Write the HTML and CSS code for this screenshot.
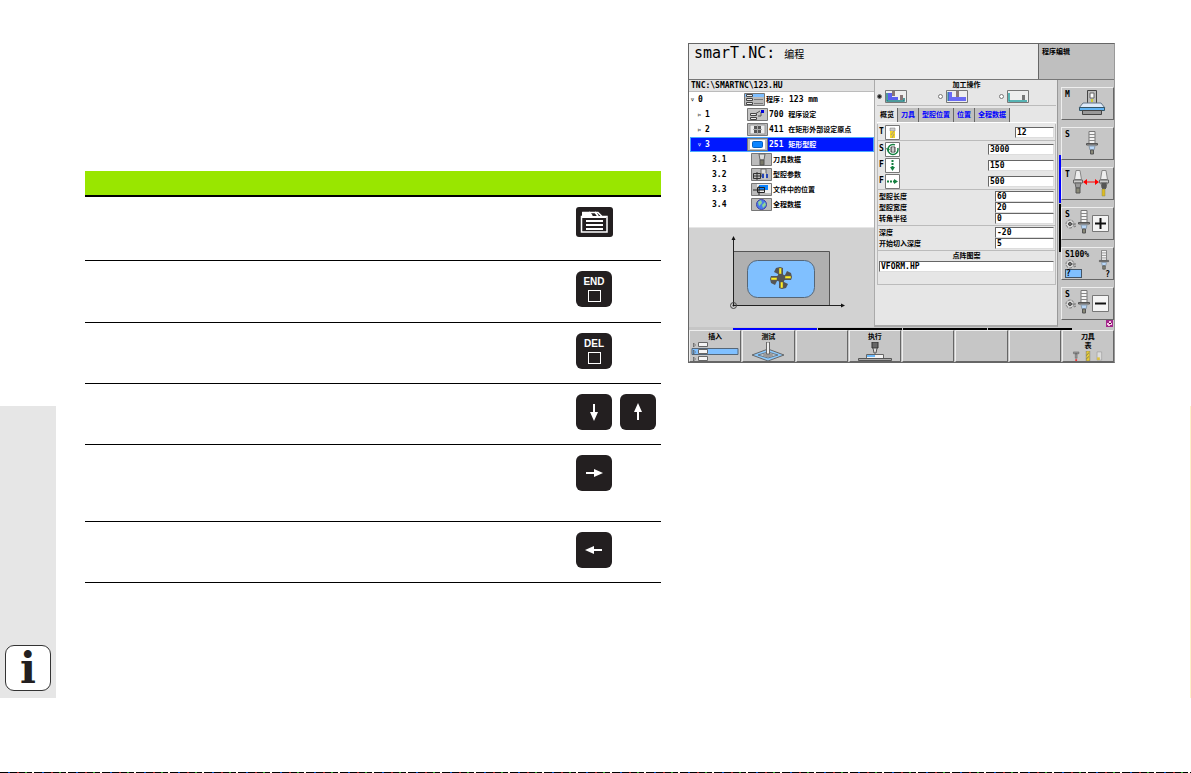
FILE: index.html
```html
<!DOCTYPE html>
<html lang="zh-CN">
<head>
    <meta charset="UTF-8">
    <meta name="viewport" content="width=device-width, initial-scale=1.0">
    <title>smarT.NC</title>
    <link rel="stylesheet" href="styles.css">
</head>
<body>
    <!-- Shared icons -->
    <svg class="defs" width="0" height="0" aria-hidden="true">
        <symbol id="spindle" viewBox="0 0 12 24">
            <path d="M3 .5h6v12H3z" fill="#f4f4f4" stroke="#777"/>
            <path d="M3 3.5h6M3 6.5h6M3 9.5h6" stroke="#888"/>
            <path d="M.5 12.5h11v1.500H.5z" fill="#999" stroke="#555"/>
            <path d="M3 15h6l-1 4H4z" fill="#b9d8fa" stroke="#89a"/>
            <path d="M4.500 19h3v4h-3z" fill="#887" stroke="#555"/>
        </symbol>
        <symbol id="knob" viewBox="0 0 12 10">
            <circle cx="5" cy="5" r="4" fill="#d8d8d8" stroke="#777" stroke-dasharray="3 1"/>
            <circle cx="5" cy="5" r="1.500" fill="#777" stroke="#444"/>
            <path d="M7 5h4M9 8l2-1" stroke="#777"/>
        </symbol>
        <symbol id="holder" viewBox="0 0 10 26">
            <path d="M3 .5h4l1.500 9h-7z" fill="#eee" stroke="#888"/>
            <path d="M.5 10h9v3h-9z" fill="#ccc" stroke="#666"/>
            <path d="M2 13h6l-1 5H3z" fill="#999" stroke="#666"/>
        </symbol>
        <symbol id="blade" viewBox="-12 -12 24 24">
            <path d="M-2 0l-1-4-4-2 2-4 4-1 3 1v7l1 3z" fill="#555"/>
            <path d="M-2-10h2.500v6H-2z" fill="#fe2" stroke="#665" stroke-width=".5"/>
        </symbol>
    </svg>

    <div class="page">
        <aside class="side">
            <div class="info">i</div>
        </aside>

        <!-- Key overview -->
        <table class="keys">
            <thead>
                <tr><th></th><th></th></tr>
            </thead>
            <tbody>
                <tr class="tall">
                    <td></td>
                    <td>
                        <button class="hard-key wide" aria-label="Screen">
                            <svg width="37" height="30" viewBox="0 0 37 30">
                                <path d="M5.500 25V9.500H7V5.500h15l4 4h5V25z" fill="none" stroke="#fff" stroke-width="1.500"/>
                                <path d="M6 10h24" stroke="#fff" stroke-width="2"/>
                                <path d="M6 5h7l3 4H6z" fill="#fff"/>
                                <path d="M13 5l3 4M19 5l3 4" stroke="#fff" stroke-width="2"/>
                                <path d="M10 14h17M10 18h17M10 22h17" stroke="#fff" stroke-width="2"/>
                            </svg>
                        </button>
                    </td>
                </tr>
                <tr class="mid">
                    <td></td>
                    <td><button class="hard-key">END<span class="square"></span></button></td>
                </tr>
                <tr>
                    <td></td>
                    <td><button class="hard-key">DEL<span class="square"></span></button></td>
                </tr>
                <tr>
                    <td></td>
                    <td>
                        <div class="pair">
                            <button class="hard-key" aria-label="Down"><svg width="18" height="18" viewBox="0 0 18 18"><path d="M8 1h2v8h3L9 18 5 9h3z" fill="#fff"/></svg></button>
                            <button class="hard-key" aria-label="Up"><svg width="18" height="18" viewBox="0 0 18 18"><path d="M8 17h2V9h3L9 0 5 9h3z" fill="#fff"/></svg></button>
                        </div>
                    </td>
                </tr>
                <tr class="taller">
                    <td></td>
                    <td><button class="hard-key" aria-label="Right"><svg width="18" height="18" viewBox="0 0 18 18"><path d="M1 8v2h8v3l9-4-9-4v3z" fill="#fff"/></svg></button></td>
                </tr>
                <tr>
                    <td></td>
                    <td><button class="hard-key" aria-label="Left"><svg width="18" height="18" viewBox="0 0 18 18"><path d="M17 8v2H9v3L0 9l9-4v3z" fill="#fff"/></svg></button></td>
                </tr>
            </tbody>
        </table>

        <!-- Control screen -->
        <main class="screen">
            <header class="top">
                <h1 class="mode">smarT.NC: <span>编程</span></h1>
                <div class="mode-side">程序编辑</div>
            </header>

            <div class="work">
                <section class="left">
                    <div class="path">TNC:\SMARTNC\123.HU</div>
                    <ul class="tree">
                        <li class="root">
                            <i>▿</i><b>0</b>
                            <svg width="21" height="13" viewBox="0 0 21 13"><path d="M.5.5h20v12H.5z" fill="#bbb" stroke="#777"/><path d="M1 1h19v3H1z" fill="#7fbfff"/><path d="M2.500 1.500h6v2h-6zM2.500 5.500h6v2h-6zM2.500 9.500h6v2h-6z" fill="#eee" stroke="#444"/><path d="M10 6.500h9M10 10.500h9" stroke="#777"/></svg>
                            <span class="cn">程序: </span><span>&nbsp;123 mm</span>
                        </li>
                        <li>
                            <i>▹</i><b>1</b>
                            <svg width="21" height="13" viewBox="0 0 21 13"><path d="M.5.5h20v12H.5z" fill="#c4c4c4" stroke="#777"/><path d="M3.500 5.500h6v2h-6zM3.500 9.500h6v2h-6z" fill="#eee" stroke="#444"/><path d="M8 6l5-3M11 8h3V4" fill="none" stroke="#555"/><path d="M14 2h3v3h-3z" fill="#00d"/></svg>
                            <span>700&nbsp;</span><span class="cn">程序设定</span>
                        </li>
                        <li>
                            <i>▹</i><b>2</b>
                            <svg width="21" height="13" viewBox="0 0 21 13"><path d="M.5.5h20v12H.5z" fill="#bbb" stroke="#777"/><path d="M3 2h15v9H3z" fill="#eee" stroke="#999"/><path d="M7 3h7v7H7z" fill="#555"/><path d="M10.500 2v9M6 6.500h9" stroke="#aaa"/></svg>
                            <span>411&nbsp;</span><span class="cn">在矩形外部设定原点</span>
                        </li>
                        <li class="current">
                            <i>▿</i><b>3</b>
                            <svg width="21" height="13" viewBox="0 0 21 13"><path d="M.5.5h20v12H.5z" fill="#bbb" stroke="#777"/><path d="M3 2h15v9H3z" fill="#fff"/><rect x="5.500" y="3.500" width="10" height="6" rx="1" fill="#0c84ff" stroke="#0560c0"/></svg>
                            <span>251&nbsp;</span><span class="cn">矩形型腔</span>
                        </li>
                        <li class="leaf">
                            <b>3.1</b>
                            <svg width="21" height="13" viewBox="0 0 21 13"><path d="M.5.5h20v12H.5z" fill="#bbb" stroke="#777"/><path d="M8 1h6l-1 6H9z" fill="#ddd" stroke="#666"/><path d="M9 7h4v5H9z" fill="#776" stroke="#555"/></svg>
                            <span class="cn">刀具数据</span>
                        </li>
                        <li class="leaf">
                            <b>3.2</b>
                            <svg width="21" height="13" viewBox="0 0 21 13"><path d="M.5.5h20v12H.5z" fill="#bbb" stroke="#777"/><path d="M10 1h5v5h-5z" fill="#ddd" stroke="#666"/><path d="M2.500 5.500h7v5h-7zM6 4v8M2 8h15" fill="none" stroke="#333"/><path d="M11 6h6v4h-6z" fill="#2547b8"/><path d="M13 5h2v6h-2z" fill="#ccc"/></svg>
                            <span class="cn">型腔参数</span>
                        </li>
                        <li class="leaf">
                            <b>3.3</b>
                            <svg width="21" height="13" viewBox="0 0 21 13"><path d="M.5.5h20v12H.5z" fill="#bbb" stroke="#777"/><path d="M6 1h14v9H6z" fill="#eee"/><path d="M8 2h9v5H8z" fill="#0c84ff"/><path d="M6.500 4.500h7v5h-7zM2 7h12M8 3v9" fill="none" stroke="#222"/></svg>
                            <span class="cn">文件中的位置</span>
                        </li>
                        <li class="leaf">
                            <b>3.4</b>
                            <svg width="21" height="13" viewBox="0 0 21 13"><path d="M.5.5h20v12H.5z" fill="#bbb" stroke="#777"/><circle cx="10.500" cy="6.500" r="5" fill="#4778ee" stroke="#4444a0"/><path d="M7 4l3-2 1 3-3 3zM11 7l3-3 1 3-3 3z" fill="#8ed694"/></svg>
                            <span class="cn">全程数据</span>
                        </li>
                    </ul>
                    <div class="graphic">
                        <svg width="120" height="76" viewBox="0 0 120 76">
                            <path d="M5.500 16.500h96v54h-96z" fill="#b0b0b0" stroke="#555"/>
                            <rect x="19.500" y="25.500" width="67" height="37" rx="10" fill="#80c0ff" stroke="#567"/>
                            <path d="M5.500 70.500V4M5.500 70.500H114" stroke="#222"/>
                            <path d="M5.500 1l2 4h-4zM117 70.500l-4-2v4z" fill="#111"/>
                            <circle cx="5.500" cy="70.500" r="3" fill="none" stroke="#444"/>
                            <circle cx="5.500" cy="70.500" r="1" fill="#111"/>
                            <g transform="translate(53 43)">
                                <use href="#blade" x="-12" y="-12" width="24" height="24"/>
                                <use href="#blade" x="-12" y="-12" width="24" height="24" transform="rotate(90)"/>
                                <use href="#blade" x="-12" y="-12" width="24" height="24" transform="rotate(180)"/>
                                <use href="#blade" x="-12" y="-12" width="24" height="24" transform="rotate(270)"/>
                                <circle r="4" fill="#555"/>
                            </g>
                        </svg>
                    </div>
                </section>

                <form class="form">
                    <fieldset class="operation">
                        <legend>加工操作</legend>
                        <div class="choices">
                            <label><input type="radio" name="op" aria-label="粗加工和精加工" checked>
                                <svg width="22" height="13" viewBox="0 0 22 13"><path d="M.5.5h21v12H.5z" fill="#eee" stroke="#777"/><path d="M3 3v7h10V7H7V3z" fill="#5b60f0"/><path d="M2 3v8h17V8" fill="none" stroke="#197f80" stroke-width="1.500"/><path d="M7 1h3v5H7zM15 5h3v5h-3z" fill="#877"/></svg>
                            </label>
                            <label><input type="radio" name="op" aria-label="粗加工">
                                <svg width="22" height="13" viewBox="0 0 22 13"><path d="M.5.5h21v12H.5z" fill="#eee" stroke="#777"/><path d="M2 2v9h18V7H6V2z" fill="#6a6af5"/><path d="M2 2v9" stroke="#197f80"/><path d="M10 1h3v6h-3z" fill="#877"/></svg>
                            </label>
                            <label><input type="radio" name="op" aria-label="精加工">
                                <svg width="22" height="13" viewBox="0 0 22 13"><path d="M.5.5h21v12H.5z" fill="#eee" stroke="#777"/><path d="M2 3v8h18" fill="none" stroke="#26a0a0" stroke-width="1.500"/><path d="M15 5h3v5h-3z" fill="#777"/></svg>
                            </label>
                        </div>
                    </fieldset>

                    <nav class="tabs">
                        <button type="button" class="active">概览</button>
                        <button type="button">刀具</button>
                        <button type="button">型腔位置</button>
                        <button type="button">位置</button>
                        <button type="button">全程数据</button>
                    </nav>

                    <div class="panel">
                        <div class="group">
                            <div class="field big">
                                <label for="tool">T</label>
                                <svg width="15" height="15" viewBox="0 0 15 15"><path d="M.5.5h14v14H.5z" fill="#fff" stroke="#777"/><path d="M5 3h5v3H5z" fill="#ccc" stroke="#777" stroke-width=".5"/><path d="M5 6h5v7H5z" fill="#f1d52a"/><path d="M9 6l-3 4M9 9l-2 4" stroke="#a97"/></svg>
                                <input id="tool" class="short" value="12">
                            </div>
                        </div>
                        <div class="group">
                            <div class="field big">
                                <label for="speed">S</label>
                                <svg width="15" height="15" viewBox="0 0 15 15"><path d="M.5.5h14v14H.5z" fill="#fff" stroke="#777"/><circle cx="8" cy="7.500" r="5" fill="none" stroke="#158040" stroke-width="1.500" stroke-dasharray="25 4"/><path d="M1 6l2 4 2-3z" fill="#158040"/><path d="M6 5h4v5H6z" fill="#aaa" stroke="#444"/><path d="M8 5v5" stroke="#eee"/></svg>
                                <input id="speed" class="long" value="3000">
                            </div>
                            <div class="field big">
                                <label for="feed-z">F</label>
                                <svg width="15" height="15" viewBox="0 0 15 15"><path d="M.5.5h14v14H.5z" fill="#fff" stroke="#777"/><path d="M7.500 2v7" stroke="#158040" stroke-width="2" stroke-dasharray="2 1"/><path d="M5 9h5l-2.500 4z" fill="#158040"/></svg>
                                <input id="feed-z" class="long" value="150">
                            </div>
                            <div class="field big">
                                <label for="feed">F</label>
                                <svg width="15" height="15" viewBox="0 0 15 15"><path d="M.5.5h14v14H.5z" fill="#fff" stroke="#777"/><path d="M2 7.500h8" stroke="#158040" stroke-width="2" stroke-dasharray="2 1"/><path d="M9 5v5l4-2.500z" fill="#158040"/></svg>
                                <input id="feed" class="long" value="500">
                            </div>
                        </div>
                        <div class="group lines">
                            <div class="field"><label for="length">型腔长度</label><input id="length" value="60"></div>
                            <div class="field"><label for="width">型腔宽度</label><input id="width" value="20"></div>
                            <div class="field"><label for="radius">转角半径</label><input id="radius" value="0"></div>
                        </div>
                        <div class="group lines">
                            <div class="field"><label for="depth">深度</label><input id="depth" value="-20"></div>
                            <div class="field"><label for="plunge">开始切入深度</label><input id="plunge" value="5"></div>
                        </div>
                        <div class="group pattern">
                            <label for="pattern">点阵图案</label>
                            <input id="pattern" value="VFORM.HP">
                        </div>
                    </div>
                </form>

                <aside class="right">
                    <div class="bars"><span></span><span></span></div>
                    <div class="soft-column">
                        <button class="soft">
                            <span class="mark">M</span>
                            <svg width="28" height="26" viewBox="0 0 28 26"><path d="M9.500.5h9v14h-9z" fill="#bbb" stroke="#444"/><path d="M12 3h4v5h-4z" fill="#fff" stroke="#666"/><path d="M13 9h2v3h-2z" fill="#cc3"/><path d="M5 13h18l4 5H1z" fill="#ddeafa" stroke="#678"/><path d="M1.500 17.500h25v3h-25z" fill="#62b4f5" stroke="#356"/><path d="M4.500 20.500h19v4h-19z" fill="#999" stroke="#444"/></svg>
                        </button>
                        <button class="soft">
                            <span class="mark">S</span>
                            <svg class="center" width="12" height="26"><use href="#spindle"/></svg>
                        </button>
                        <button class="soft">
                            <span class="mark">T</span>
                            <svg class="swap" width="36" height="28" viewBox="0 0 36 28"><use href="#holder" width="10" height="26"/><use href="#holder" x="26" width="10" height="26"/><path d="M3 18h4v5H3z" fill="#887" stroke="#555"/><path d="M29 13h4v6h-4z" fill="#555"/><path d="M29 19h3v7h-3z" fill="#db2" stroke="#885" stroke-width=".5"/><path d="M12 12h12" stroke="#f00"/><path d="M10 12l4-3v6zM26 12l-4-3v6z" fill="#f00"/></svg>
                        </button>
                        <button class="soft" aria-label="S +">
                            <span class="mark">S<svg width="12" height="10"><use href="#knob"/></svg></span>
                            <svg class="tool" width="12" height="24"><use href="#spindle"/></svg>
                            <svg class="sign" width="17" height="17" viewBox="0 0 17 17"><path d="M.5.5h16v16H.5z" fill="#f4f4f4" stroke="#777"/><path d="M3 8.500h11M8.500 3v11" stroke="#111" stroke-width="2"/></svg>
                        </button>
                        <button class="soft">
                            <span class="mark">S100%<svg width="12" height="10"><use href="#knob"/></svg><em>?</em></span>
                            <span class="percent"><svg width="12" height="20"><use href="#spindle"/></svg>?</span>
                        </button>
                        <button class="soft" aria-label="S -">
                            <span class="mark">S<svg width="12" height="10"><use href="#knob"/></svg></span>
                            <svg class="tool" width="12" height="24"><use href="#spindle"/></svg>
                            <svg class="sign" width="17" height="17" viewBox="0 0 17 17"><path d="M.5.5h16v16H.5z" fill="#f4f4f4" stroke="#777"/><path d="M3 8.500h11" stroke="#111" stroke-width="2"/></svg>
                        </button>
                        <svg class="status" width="7" height="7" viewBox="0 0 7 7"><path d="M0 0h7v7H0z" fill="#a3288c"/><path d="M1 3h2V1h2v2h1v2H4v1H2V5H1z" fill="#f8c8e8"/><path d="M3 3h2v1H3z" fill="#412"/></svg>
                    </div>
                </aside>
            </div>

            <div class="pages"><span class="on"></span><span></span><span></span><span></span></div>

            <footer class="soft-row">
                <button class="soft">插入
                    <svg width="48" height="19" viewBox="0 0 48 19"><path d="M1 6.500h46v6H1z" fill="#80c0ff" stroke="#567"/><path d="M7.500.5h9v4h-9zM7.500 7.500h9v4h-9zM7.500 14.500h9v4h-9z" fill="#f4f4f4" stroke="#666"/><path d="M2.500 1v4l2-2zM2.500 8v4l2-2zM2.500 15v4l2-2z" fill="none" stroke="#555" stroke-width=".7"/></svg>
                </button>
                <button class="soft">测试
                    <svg width="34" height="19" viewBox="0 0 34 19"><path d="M1 13l16-6 16 6-16 6z" fill="#8bc8fb" stroke="#666"/><path d="M7 13l10-3 10 3-10 3z" fill="#ccc" stroke="#678"/><ellipse cx="17" cy="13" rx="5" ry="2" fill="#999"/><path d="M15.500 0h3v12h-3z" fill="#eee" stroke="#666"/></svg>
                </button>
                <button class="soft" aria-label="空"></button>
                <button class="soft">执行
                    <svg width="34" height="19" viewBox="0 0 34 19"><path d="M14 0h6v6h-6z" fill="#666" stroke="#333"/><path d="M15 6h4l-1 5h-2z" fill="#ddd" stroke="#555"/><path d="M8.500 12.500h17v4h-17z" fill="#f4f4f4" stroke="#666"/><path d="M9 13h8v2H9z" fill="#6bb8fa"/><path d="M.5 16.500h33v2H.5z" fill="#aaa" stroke="#555"/></svg>
                </button>
                <button class="soft" aria-label="空"></button>
                <button class="soft" aria-label="空"></button>
                <button class="soft" aria-label="空"></button>
                <button class="soft">刀具<br>表
                    <svg width="34" height="10" viewBox="0 0 34 11"><path d="M1 1h6v2H1zM3 3h2v5H3z" fill="#999" stroke="#555" stroke-width=".5"/><path d="M3 9h2v2H3z" fill="#e33"/><path d="M15 0h4v11h-4z" fill="#e9cc32" stroke="#666" stroke-width=".5"/><path d="M18 2l-3 3M18 6l-3 3" stroke="#775"/><path d="M27 1h5v9h-5z" fill="#ddd" stroke="#888" stroke-width=".5"/><path d="M27 7h3v3h-3z" fill="#dbc040"/></svg>
                </button>
            </footer>
        </main>
        <div class="edge"></div>
    </div>
    <div class="strip"></div>
</body>
</html>
```

FILE: styles.css
```css
* {
    margin: 0;
    padding: 0;
    box-sizing: border-box;
}

body {
    background: #fff;
    color: #000;
    font-family: "DejaVu Sans Mono", "Noto Sans CJK SC", monospace;
    min-height: 100vh;
    display: flex;
    flex-direction: column;
}

button,
input {
    font: inherit;
    color: inherit;
}

svg {
    display: block;
    flex: none;
}

.defs {
    position: absolute;
}

.page {
    flex: 1;
    display: flex;
    align-items: flex-start;
}

.strip {
    height: 1px;
    background: repeating-linear-gradient(90deg, #000 0 8px, #05c 8px 10px, #000 10px 17px, #a22 17px 19px, #000 19px 25px, #3a3 25px 27px, #000 27px 32px, #ffe 32px 34px);
}

/* Margin tab with the info sign */
.side {
    align-self: flex-end;
    width: 56px;
    height: 292px;
    margin-bottom: 74px;
    padding: 0 5px 7px;
    background: #e6e6e6;
    display: flex;
    align-items: flex-end;
}

.info {
    width: 46px;
    height: 46px;
    border: 1px solid #333;
    border-radius: 9px;
    background: #fff;
    color: #231f20;
    font: bold 42px/46px "DejaVu Serif", serif;
    text-align: center;
}

.edge {
    align-self: flex-end;
    width: 1px;
    height: 292px;
    margin: 0 0 74px 75px;
    background: #fff3c8;
}

/* Key table */
.keys {
    flex: 1;
    margin: 171px 27px 0 29px;
    border-collapse: separate;
    border-spacing: 0;
    table-layout: fixed;
}

.keys th {
    height: 26px;
    background: #99e600;
    border-bottom: 2px solid #000;
}

.keys th:last-child {
    width: 85px;
}

.keys td {
    height: 61px;
    padding-top: 10px;
    vertical-align: top;
    border-bottom: 1px solid #000;
}

.keys .tall td {
    height: 64px;
}

.keys .mid td {
    height: 62px;
}

.keys .taller td {
    height: 77px;
}

.pair {
    display: flex;
    gap: 8px;
}

.hard-key {
    width: 36px;
    height: 36px;
    border: none;
    border-radius: 6px;
    background: #231f20;
    color: #fff;
    font: bold 10px/10px "Liberation Sans", Arial, sans-serif;
    display: flex;
    flex-direction: column;
    align-items: center;
    justify-content: center;
    gap: 3px;
}

.hard-key.wide {
    width: 37px;
    height: 30px;
    border-radius: 3px;
}

.square {
    width: 13px;
    height: 12px;
    border: 1px solid #fff;
}

/* Control screen */
.screen {
    width: 427px;
    margin-top: 43px;
    border: 1px solid #666;
    border-right-color: #999;
    background: #c6c6c6;
    font-size: 8px;
    line-height: 10px;
}

.top {
    height: 36px;
    display: flex;
    border-bottom: 1px solid #777;
}

.mode {
    flex: 1;
    padding: 1px 5px;
    background: #ececec;
    font-size: 15px;
    font-weight: normal;
    line-height: 16px;
}

.mode span {
    font-size: 10px;
}

.mode-side {
    width: 76px;
    padding: 3px;
    border-left: 1px solid #666;
    background: #bfbfbf;
    font-size: 7px;
    font-weight: bold;
}

.work {
    display: flex;
    height: 247px;
}

.left {
    width: 185px;
    display: flex;
    flex-direction: column;
}

.path {
    height: 12px;
    padding-left: 2px;
    background: #e2e2e2;
    border-bottom: 1px solid #bbb;
    font-weight: bold;
    line-height: 12px;
}

.tree {
    height: 135px;
    background: #fff;
    list-style: none;
    font-weight: bold;
}

.tree li {
    height: 15px;
    padding-left: 8px;
    display: flex;
    align-items: center;
    white-space: nowrap;
}

.tree .root {
    padding-left: 1px;
}

.tree .leaf {
    padding-left: 23px;
}

.tree i {
    width: 8px;
    font-style: normal;
    font-weight: normal;
}

.tree b {
    width: 42px;
}

.tree .root b {
    width: 46px;
}

.tree .leaf b {
    width: 39px;
}

.tree svg {
    margin-right: 1px;
}

.tree .current {
    margin-left: 1px;
    padding-left: 7px;
    background: #0018ff;
    box-shadow: inset 0 0 0 1px #4aa8ff;
    color: #fff;
}

.cn {
    font-size: 7px;
}

.graphic {
    flex: 1;
    padding: 7px 0 0 39px;
    background: #d2d2d2;
    border-top: 1px solid #e6e6e6;
}

/* Form */
.form {
    flex: 1;
    padding: 0 1px 0 2px;
    background: #e6e6e6;
    border-left: 1px solid #aaa;
    border-right: 1px solid #999;
    border-bottom: 2px solid #aaa;
    font-size: 7px;
    font-weight: bold;
}

.operation {
    height: 26px;
    border: none;
    border-bottom: 1px solid #bbb;
}

.operation legend {
    width: 100%;
    text-align: center;
    line-height: 10px;
}

.choices {
    display: flex;
    gap: 31px;
}

.choices label {
    display: flex;
    align-items: center;
    gap: 3px;
}

.choices input {
    appearance: none;
    width: 5px;
    height: 5px;
    border: 1px solid #777;
    border-radius: 50%;
    background: #fff;
}

.choices input:checked {
    background: #222;
}

.tabs {
    display: flex;
    margin-top: 2px;
}

.tabs button {
    height: 14px;
    padding: 0 3px;
    border: none;
    border-right: 1px solid #666;
    background: #bfbfbf;
    color: #00f;
}

.tabs .active {
    background: #e6e6e6;
    color: #000;
}

.panel {
    padding-top: 1px;
    border-top: 1px solid #fff;
}

.group {
    padding: 0 1px;
    border: 1px solid #bbb;
    border-top: none;
}

.group.lines {
    padding: 1px;
}

.field {
    height: 11px;
    display: flex;
    align-items: center;
}

.field.big {
    height: 16px;
}

.big label {
    width: 6px;
    font-size: 8px;
}

.group input {
    width: 59px;
    height: 11px;
    margin-left: auto;
    padding: 0 1px;
    border: 1px solid #ddd;
    border-top-color: #666;
    border-left-color: #666;
    background: #fff;
    font-size: 8px;
}

.group .short {
    width: 39px;
}

.group .long {
    width: 66px;
}

.pattern {
    height: 34px;
    text-align: center;
}

.pattern label {
    display: block;
}

.group.pattern input {
    display: block;
    width: 100%;
}

/* Soft keys */
.right {
    width: 56px;
    display: flex;
}

.bars {
    margin: 75px 0 0 1px;
    display: flex;
    flex-direction: column;
    gap: 1px;
}

.bars span {
    width: 2px;
    height: 48px;
    background: #000;
}

.bars span:first-child {
    background: #00f;
}

.soft-column {
    flex: 1;
    min-width: 0;
    padding-top: 7px;
    display: flex;
    flex-direction: column;
    gap: 7px;
}

.soft {
    border: 1px solid #eee;
    border-right-color: #666;
    border-bottom-color: #666;
    background: #c6c6c6;
    font-size: 8px;
    line-height: 9px;
}

.soft-column .soft {
    height: 33px;
    padding: 2px 3px;
    display: flex;
    align-items: flex-start;
    font-weight: bold;
}

.mark {
    width: 13px;
    display: flex;
    flex-direction: column;
    text-align: left;
}

.mark em {
    width: 17px;
    height: 9px;
    border: 1px solid #456;
    background: #80c0ff;
    font-style: normal;
    line-height: 7px;
}

.soft-column .center {
    margin-left: 8px;
}

.soft-column .swap {
    margin-left: -5px;
}

.sign {
    align-self: center;
    margin-left: 2px;
}

.percent {
    margin-left: auto;
    display: flex;
    flex-direction: column;
    align-items: flex-end;
}

.status {
    align-self: flex-end;
    margin: -7px 1px 0 0;
}

.pages {
    height: 3px;
    padding: 1px 42px 0 44px;
    display: flex;
    gap: 1px;
}

.pages span {
    flex: 1;
    background: #000;
}

.pages .on {
    background: #00f;
}

.soft-row {
    display: flex;
    gap: 1px;
}

.soft-row .soft {
    flex: 1;
    height: 32px;
    padding-top: 2px;
    display: flex;
    flex-direction: column;
    align-items: center;
    font-size: 7px;
    font-weight: bold;
}

.soft-row svg {
    margin-top: auto;
}
```
